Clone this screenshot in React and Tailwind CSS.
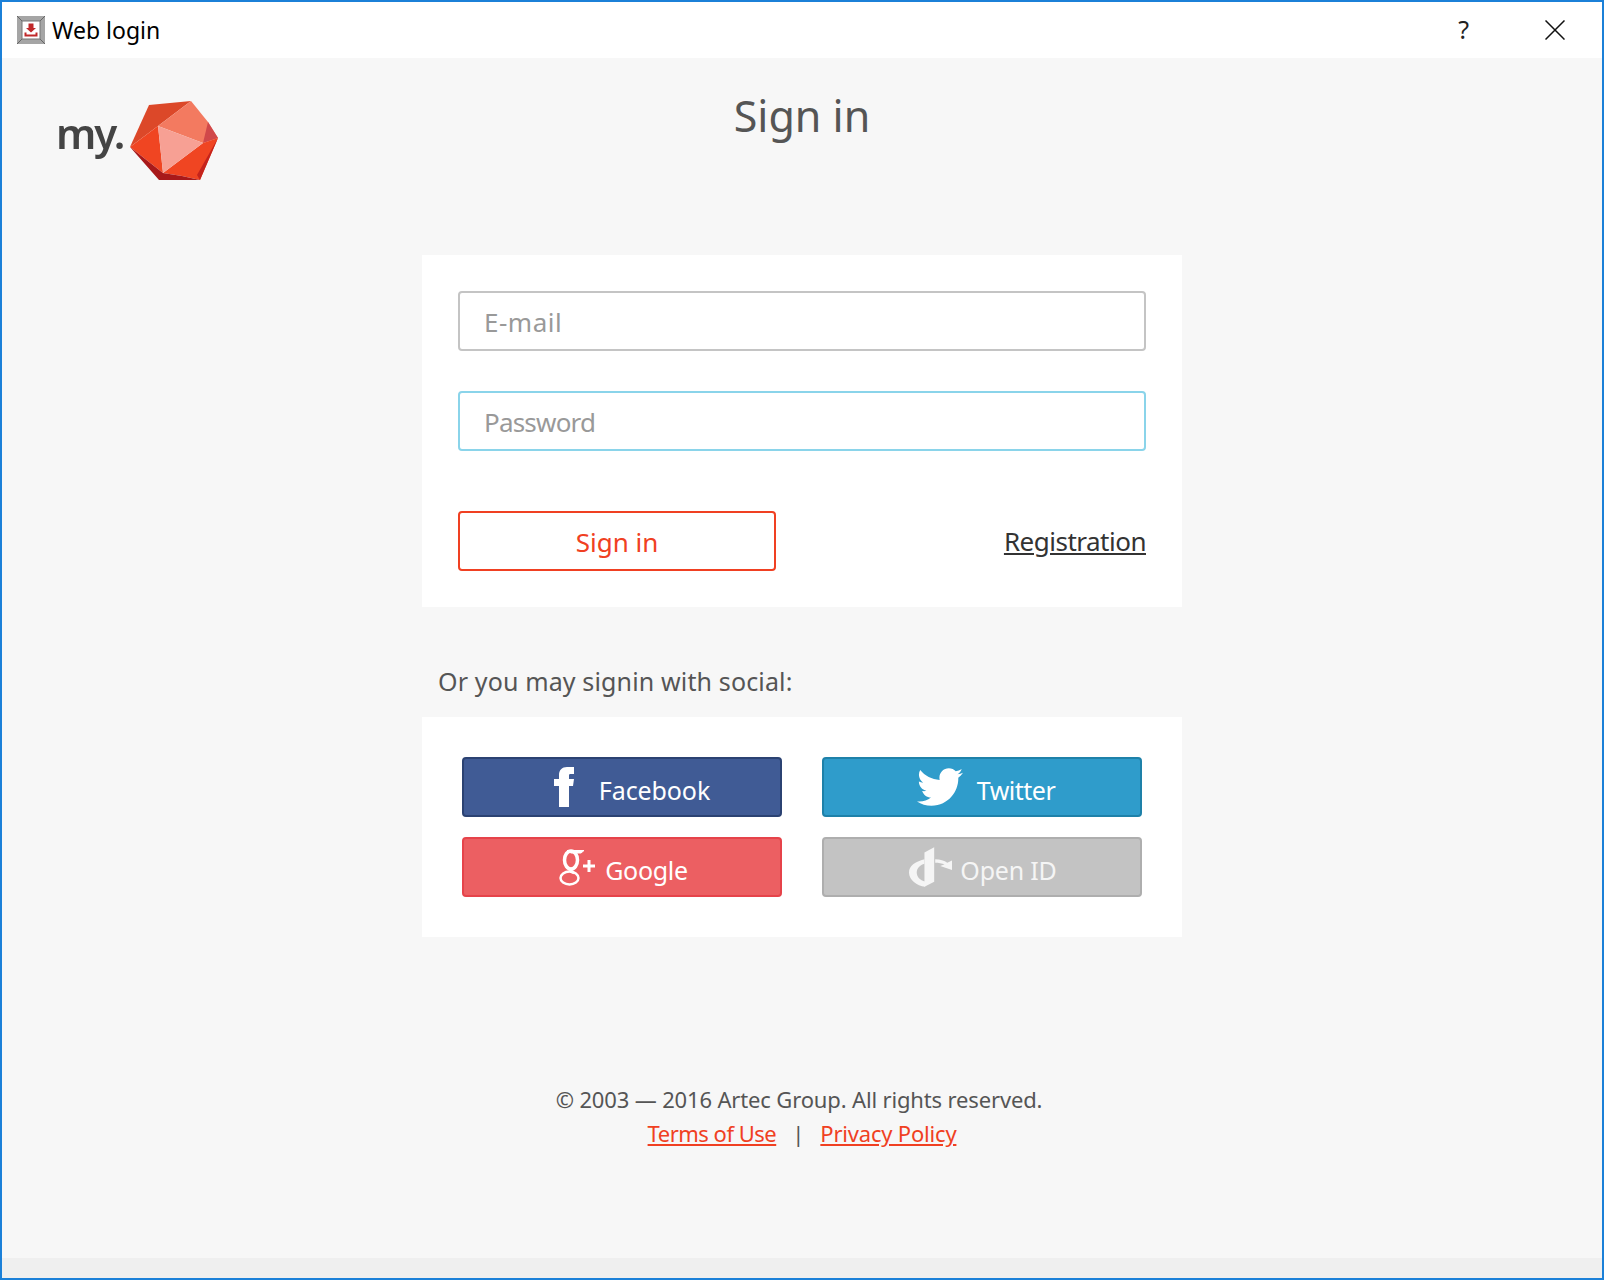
import React from "react";
import { FaTwitter } from "react-icons/fa";

const font = "font-['Noto_Sans',sans-serif]";

const AppIcon = () => (
  <svg width="28" height="28" viewBox="0 0 28 28">
    <rect width="28" height="28" fill="#a5a5a5" />
    <path d="M0 0L5 5M28 0L23 5M0 28L5 23M28 28L23 23" stroke="#666" strokeWidth="1" />
    <rect x="5" y="5" width="18" height="18" fill="#fff" stroke="#777" />
    <path d="M11.500 7.500h5v4.500h2.500l-5 4.500-5-4.500h2.500z" fill="#c0282a" />
    <path d="M8.500 16.500v3h11v-3" stroke="#c0282a" strokeWidth="2" fill="none" />
  </svg>
);

const Logo = () => (
  <div className="flex items-center gap-[5px]">
    <span className="font-['Noto_Sans',sans-serif] text-[42px] font-semibold text-[#444] tracking-[-2px] blur-[0.5px] mt-[-16px]">
      my.
    </span>
    <svg className="blur-[0.4px] mt-[2px]" width="92" height="82" viewBox="8 9 92 82">
      <path d="M29 14L71 10L38 35L10 56Z" fill="#dc4829" />
      <path d="M71 10L88 31L98 47L83 52L38 35Z" fill="#f37a60" />
      <path d="M88 31L98 47L83 52Z" fill="#d0484a" />
      <path d="M10 56L38 35L43 82Z" fill="#f04522" />
      <path d="M43 82L83 52L98 47L80 89L62 85Z" fill="#f04522" />
      <path d="M98 47L80 89L77 84Z" fill="#c4231c" />
      <path d="M10 56L43 82L62 85L80 89L39 89Z" fill="#a8191a" />
      <path d="M38 35L83 52L43 82Z" fill="#f7a094" />
    </svg>
  </div>
);

const FacebookIcon = () => (
  <svg width="20" height="40" viewBox="0 0 20 40" fill="currentColor">
    <path d="M5 40V19H0V12H5V8C5 3 8 0 13 0H20V7H16C15 7 15 8 15 9V12H20L19 19H15V40Z" />
  </svg>
);

const GoogleIcon = () => (
  <svg width="36" height="37" viewBox="0 0 36 37" fill="none" stroke="currentColor">
    <ellipse cx="12" cy="11" rx="6.500" ry="9" strokeWidth="3.500" />
    <ellipse cx="10.500" cy="29" rx="9" ry="6.500" strokeWidth="2.500" />
    <path d="M8 1.500H25L22 4H12Z" fill="currentColor" strokeWidth="1" />
    <path d="M14 20C10 22 11 23 15 24" strokeWidth="2.500" />
    <path d="M30 11V23M24 17H36" strokeWidth="3" />
  </svg>
);

const OpenIdIcon = () => (
  <svg width="43" height="40" viewBox="297 322 128 118" fill="currentColor">
    <path d="M343 338L372 322V425L343 440Z" />
    <path d="M343 358C315 365 297 378 297 397C297 420 320 436 345 440V424C330 420 320 410 320 397C320 385 330 375 343 371Z" />
    <path d="M375 358C390 358 402 362 411 368L425 362V390L390 378L403 373C395 370 385 368 375 368Z" />
  </svg>
);

const SocialButton = ({ className, icon, label, textClass }) => (
  <button className={`h-[60px] w-[320px] rounded-[4px] border-2 flex items-center justify-center text-white text-[25px] ${className}`}>
    {icon}
    <span className={`mt-[8px] ${textClass}`}>{label}</span>
  </button>
);

export default function App() {
  return (
    <div className={`w-[1604px] h-[1280px] border-2 border-[#1b80d8] flex flex-col bg-[#f7f7f7] ${font}`}>
      <div className="h-[56px] bg-white flex items-center pl-[15px] shrink-0">
        <AppIcon />
        <span className="ml-[7px] text-[23px] text-black">Web login</span>
        <span className="ml-auto text-[25px] text-[#222] mr-[76px]">?</span>
        <svg className="mr-[37px]" width="20" height="20" viewBox="0 0 20 20">
          <path d="M0.500 0.500L19.500 19.500M19.500 0.500L0.500 19.500" stroke="#111" strokeWidth="1.500" />
        </svg>
      </div>

      <div className="flex-1 flex flex-col items-center">
        <div className="w-full grid grid-cols-[1fr_auto_1fr] pt-[28px] h-[197px] pl-[54px]">
          <div className="pt-[12px]"><Logo /></div>
          <h1 className="text-[43px] text-[#555] leading-[60px] ml-[-54px]">Sign in</h1>
        </div>

        <div className="w-[760px] bg-white p-[36px]">
          <input placeholder="E-mail" className="block w-full h-[60px] rounded-[4px] border-2 border-[#c4c4c4] bg-white pl-[24px] pr-[24px] pt-[2px] text-[26px] tracking-[0.5px] outline-none placeholder:text-[#999]" />
          <input placeholder="Password" className="block w-full h-[60px] mt-[40px] rounded-[4px] border-2 border-[#8ad4ea] bg-white pl-[24px] pr-[24px] pt-[2px] text-[26px] tracking-[-0.8px] outline-none placeholder:text-[#999]" />
          <div className="flex items-center justify-between mt-[60px]">
            <button className="w-[318px] h-[60px] rounded-[4px] border-2 border-[#f04022] text-[#f04022] text-[26px] pt-[2px]">Sign in</button>
            <a href="#" className="text-[26px] text-[#333] underline tracking-[-0.5px]">Registration</a>
          </div>
        </div>

        <p className="w-[760px] pl-[16px] mt-[54px] h-[56px] text-[25px] text-[#555] leading-[40px] tracking-[0.14px]">Or you may signin with social:</p>

        <div className="w-[760px] bg-white p-[40px] grid grid-cols-[320px_320px] gap-x-[40px] gap-y-[20px]">
          <SocialButton
            className="bg-[#405b95] border-[#2b4272] pl-[20px]"
            icon={<FacebookIcon />}
            label="Facebook"
            textClass="ml-[25px] tracking-[-0.1px]"
          />
          <SocialButton
            className="bg-[#2f9ccb] border-[#1e81a9] pl-[8px]"
            icon={<FaTwitter size={46} />}
            label="Twitter"
            textClass="ml-[14px] tracking-[-0.5px]"
          />
          <SocialButton
            className="bg-[#ec5f62] border-[#e6434a] pl-[3px]"
            icon={<GoogleIcon />}
            label="Google"
            textClass="ml-[10px] tracking-[-0.3px]"
          />
          <SocialButton
            className="bg-[#c3c3c3] border-[#aeaeae] !text-[#f5f5f5] pl-[2px]"
            icon={<OpenIdIcon />}
            label="Open ID"
            textClass="ml-[8px] tracking-[-0.2px]"
          />
        </div>

        <div className="mt-[145px] text-center text-[22px] text-[#555] leading-[34px]">
          <p className="tracking-[-0.15px] pr-[6px]">© 2003 — 2016 Artec Group. All rights reserved.</p>
          <p>
            <a href="#" className="text-[#f04022] underline tracking-[-0.5px]">Terms of Use</a>
            <span className="mx-[16px]">|</span>
            <a href="#" className="text-[#f04022] underline tracking-[-0.2px]">Privacy Policy</a>
          </p>
        </div>
      </div>

      <div className="h-[20px] bg-[#efefef] shrink-0" />
    </div>
  );
}
